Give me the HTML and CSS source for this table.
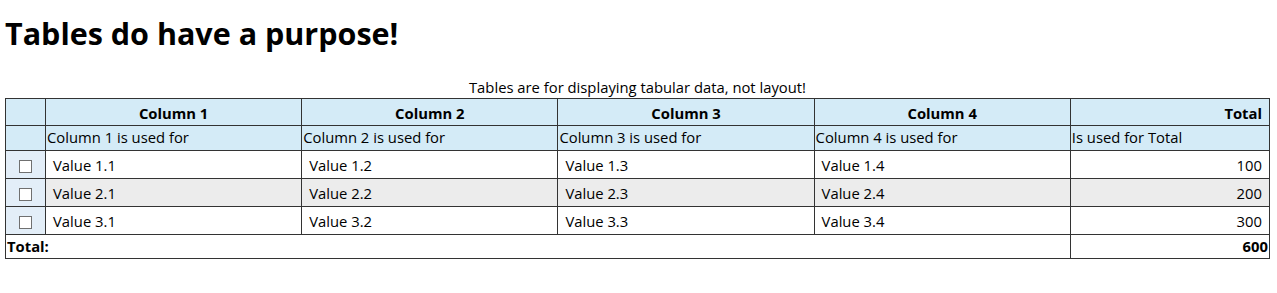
FILE: index.html
```html
<!DOCTYPE html>
<html>
<head>
<meta charset="utf-8">
<link rel="stylesheet" href="styles.css">
</head>
<body>
<h1 class="title">Tables do have a purpose!</h1>
<table class="data">
  <caption class="cap">Tables are for displaying tabular data, not layout!</caption>
  <colgroup>
    <col class="c-check">
    <col class="c-col">
    <col class="c-col">
    <col class="c-col">
    <col class="c-col">
    <col class="c-total">
  </colgroup>
  <thead>
    <tr class="h1row">
      <th class="sel"></th>
      <th>Column 1</th>
      <th>Column 2</th>
      <th>Column 3</th>
      <th>Column 4</th>
      <th class="num">Total</th>
    </tr>
    <tr class="h2row">
      <td class="sel"></td>
      <td>Column 1 is used for</td>
      <td>Column 2 is used for</td>
      <td>Column 3 is used for</td>
      <td>Column 4 is used for</td>
      <td>Is used for Total</td>
    </tr>
  </thead>
  <tbody>
    <tr>
      <td class="sel"><input type="checkbox" class="chk"></td>
      <td>Value 1.1</td>
      <td>Value 1.2</td>
      <td>Value 1.3</td>
      <td>Value 1.4</td>
      <td class="num">100</td>
    </tr>
    <tr class="alt">
      <td class="sel"><input type="checkbox" class="chk"></td>
      <td>Value 2.1</td>
      <td>Value 2.2</td>
      <td>Value 2.3</td>
      <td>Value 2.4</td>
      <td class="num">200</td>
    </tr>
    <tr>
      <td class="sel"><input type="checkbox" class="chk"></td>
      <td>Value 3.1</td>
      <td>Value 3.2</td>
      <td>Value 3.3</td>
      <td>Value 3.4</td>
      <td class="num">300</td>
    </tr>
  </tbody>
  <tfoot>
    <tr class="foot">
      <th colspan="5" class="ftl">Total:</th>
      <th class="num">600</th>
    </tr>
  </tfoot>
</table>
</body>
</html>
```
FILE: styles.css
```css
html, body {
  background: #ffffff;
}
body {
  margin: 0;
  padding: 0 5px;
  font-family: "Open Sans", "Noto Sans", sans-serif;
  font-size: 14.8px;
  line-height: 20px;
  color: #000;
}
.title {
  font-size: 30.5px;
  font-weight: 700;
  margin: 0 0 24px 0;
  padding-top: 13px;
  line-height: 40px;
}
.data {
  border-collapse: collapse;
  table-layout: fixed;
  width: 1265px;
}
.cap {
  caption-side: top;
  text-align: center;
  line-height: 20px;
  padding-bottom: 1px;
}
.c-check { width: 40px; }
.c-col { width: 256px; }
.c-total { width: 199px; }
.data th, .data td {
  border: 1px solid #333;
  padding: 0 7px;
  text-align: left;
  font-weight: 400;
  white-space: nowrap;
  line-height: 20px;
}
.data thead th, .data thead td {
  background: #d4ebf7;
}
.data .h1row th {
  font-weight: 700;
  text-align: center;
  padding-top: 4px;
  padding-bottom: 2px;
}
.data .h1row th.num {
  text-align: right;
}
.data .h2row td {
  padding: 1px 1px 3px 1px;
}
.data tbody td {
  background: #fff;
  padding-top: 4px;
  padding-bottom: 3px;
}
.data tbody tr.alt td {
  background: #ececec;
}
.data tbody td.sel,
.data tbody tr.alt td.sel {
  background: #e3eef8;
  text-align: center;
  padding: 0;
}
.data .num {
  text-align: right;
}
.chk {
  -webkit-appearance: none;
  appearance: none;
  display: inline-block;
  margin: 0;
  width: 13px;
  height: 13px;
  box-sizing: border-box;
  border: 1px solid #707070;
  background: #fff;
  border-radius: 0;
  vertical-align: middle;
}
.data .foot th {
  font-weight: 700;
  padding: 1px 1px 2px 1px;
  background: #fff;
}
```
